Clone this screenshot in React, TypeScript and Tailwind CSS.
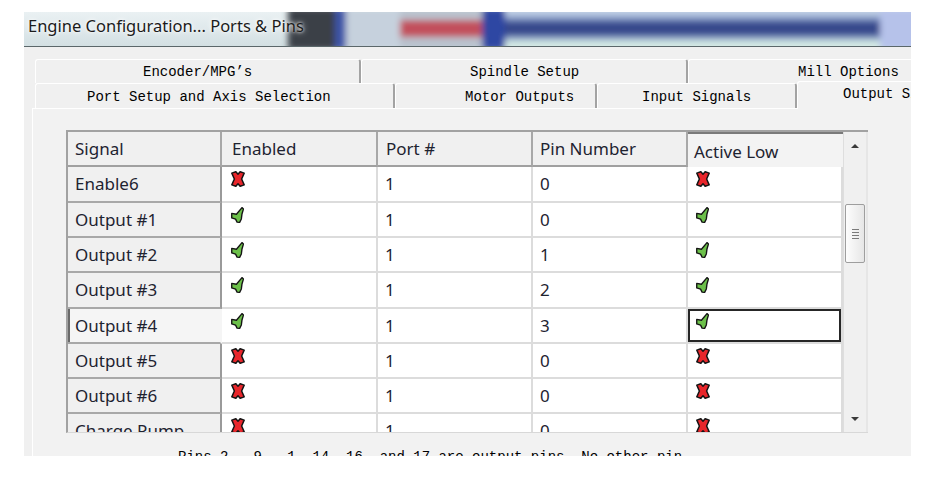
import React from "react";

type Mark = "x" | "v";

type Row = {
  signal: string;
  enabled: Mark;
  port: string;
  pin: string;
  low: Mark;
  h: string;
  current?: boolean;
};

const rows: Row[] = [
  { signal: "Enable6", enabled: "x", port: "1", pin: "0", low: "x", h: "h-[36px]" },
  { signal: "Output #1", enabled: "v", port: "1", pin: "0", low: "v", h: "h-[35px]" },
  { signal: "Output #2", enabled: "v", port: "1", pin: "1", low: "v", h: "h-[35px]" },
  { signal: "Output #3", enabled: "v", port: "1", pin: "2", low: "v", h: "h-[36px]" },
  { signal: "Output #4", enabled: "v", port: "1", pin: "3", low: "v", h: "h-[35px]", current: true },
  { signal: "Output #5", enabled: "x", port: "1", pin: "0", low: "x", h: "h-[35px]" },
  { signal: "Output #6", enabled: "x", port: "1", pin: "0", low: "x", h: "h-[35px]" },
  { signal: "Charge Pump", enabled: "x", port: "1", pin: "0", low: "x", h: "h-[35px]" },
];

function Cross() {
  return (
    <svg width="14" height="16" viewBox="0 0 13 15" className="block">
      <path
        d="M0.7 2 L4.5 0.7 L6.5 3 L8.5 0.7 L12.3 2 L9.9 7.5 L12.3 13 L8.5 14.3 L6.5 12 L4.5 14.3 L0.7 13 L3.1 7.5 Z"
        fill="#e8262b"
        stroke="#141414"
        strokeWidth="1.4"
        strokeLinejoin="round"
      />
    </svg>
  );
}

function Tick() {
  return (
    <svg width="13" height="16" viewBox="0 0 12 15" className="block">
      <path
        d="M0.6 6 L5 6.8 L10.2 0.6 L11.6 1.8 L10.2 6.5 L9.6 11.2 L8 14.4 L5.6 14.2 L4.2 11.4 L0.6 10.2 Z"
        fill="#6cc04a"
        stroke="#141414"
        strokeWidth="1.3"
        strokeLinejoin="round"
      />
    </svg>
  );
}

function MarkIcon({ m }: { m: Mark }) {
  return m === "x" ? <Cross /> : <Tick />;
}

function TitleBar() {
  return (
    <div className="relative h-[35px] shrink-0 border-b border-b-[#5b676a] overflow-hidden">
      <svg
        className="absolute inset-0"
        width="887"
        height="34"
        viewBox="0 0 887 34"
        preserveAspectRatio="none"
      >
        <defs>
          <linearGradient id="glass" x1="0" y1="0" x2="0" y2="1">
            <stop offset="0" stopColor="#eaf1f3" />
            <stop offset="1" stopColor="#d3e0e3" />
          </linearGradient>
          <linearGradient id="band" x1="0" y1="0" x2="0" y2="1">
            <stop offset="0" stopColor="#c8d6ea" />
            <stop offset="0.18" stopColor="#b3c5df" />
            <stop offset="0.3" stopColor="#5e74b0" />
            <stop offset="0.38" stopColor="#34478a" />
            <stop offset="0.6" stopColor="#34478a" />
            <stop offset="0.7" stopColor="#7c92c2" />
            <stop offset="0.8" stopColor="#cfe5e2" />
            <stop offset="1" stopColor="#d9efe7" />
          </linearGradient>
          <filter id="haze" x="-5%" y="-50%" width="110%" height="200%">
            <feGaussianBlur stdDeviation="3" />
          </filter>
        </defs>
        <rect width="887" height="34" fill="url(#glass)" />
        <g filter="url(#haze)">
          <rect x="264" y="-4" width="48" height="42" fill="#3a4047" />
          <rect x="311" y="-4" width="11" height="42" fill="#3c55a8" />
          <rect x="322" y="-4" width="54" height="42" fill="#c6d1dd" />
          <rect x="376" y="-4" width="82" height="42" fill="#b9c2ce" />
          <rect x="376" y="8" width="82" height="17" fill="#c24f5b" />
          <rect x="458" y="-4" width="23" height="42" fill="#2f47a3" />
          <rect x="481" y="-4" width="375" height="42" fill="url(#band)" />
          <rect x="856" y="-4" width="40" height="42" fill="#b6c2ea" />
        </g>
      </svg>
      <div className="relative flex h-full items-center pl-[4px] pb-[6px] font-['Noto_Sans',sans-serif] text-[16.5px] text-[#1b1b1b] [text-shadow:0_0_6px_#ffffff,0_0_3px_#ffffff]">
        Engine Configuration... Ports &amp; Pins
      </div>
    </div>
  );
}

function Tabs() {
  const tabText = "font-['Liberation_Mono',monospace] text-[14px] text-black whitespace-nowrap";
  const tab =
    "shrink-0 flex items-center border-t border-l border-t-white border-l-white border-r-2 border-r-[#a3a3a3] rounded-t-[3px] bg-[#f0f0f0]";
  return (
    <div className={tabText}>
      <div className="ml-[11px] mt-[12px] flex h-[24px]">
        <div className={`${tab} w-[326px] pl-[107px] pt-[2px]`}>Encoder/MPG’s</div>
        <div className={`${tab} w-[327px] pl-[108px] pt-[2px]`}>Spindle Setup</div>
        <div className={`${tab} w-[330px] pl-[109px] pt-[2px]`}>Mill Options</div>
      </div>
      <div className="ml-[11px] flex h-[25px]">
        <div className={`${tab} w-[360px] pl-[51px] pt-[3px]`}>Port Setup and Axis Selection</div>
        <div className={`${tab} w-[202px] pl-[69px] pt-[3px]`}>Motor Outputs</div>
        <div className={`${tab} w-[200px] pl-[44px] pt-[3px]`}>Input Signals</div>
        <div className="relative z-10 -mt-[2px] mb-[-1px] flex h-[28px] w-[200px] shrink-0 items-center rounded-t-[3px] border-t border-l border-t-white border-l-white bg-[#f2f2f2] pl-[45px] pb-[3px]">
          Output Signals
        </div>
      </div>
    </div>
  );
}

function HeaderCell({
  label,
  w,
  pl,
  extra = "",
}: {
  label: string;
  w: string;
  pl: string;
  extra?: string;
}) {
  return (
    <div
      className={`flex h-full shrink-0 items-center bg-[#f0f0f0] border-r-2 border-r-[#a8a8a8] border-b-2 border-b-[#a0a0a0] ${w} ${pl} ${extra}`}
    >
      {label}
    </div>
  );
}

function DataRow({ r }: { r: Row }) {
  const cell = "flex h-full shrink-0 bg-white border-r-2 border-r-[#dcdcdc] border-b-2 border-b-[#dcdcdc]";
  return (
    <div className={`flex shrink-0 ${r.h}`}>
      <div
        className={`flex h-full w-[154px] shrink-0 items-center border-b-2 border-b-[#a8a8a8] pl-[7px] ${
          r.current
            ? "bg-[#f5f5f5] border-r-2 border-r-transparent shadow-[inset_2px_0_0_#6a6a6a]"
            : "bg-[#f0f0f0] border-r-2 border-r-[#9a9a9a]"
        }`}
      >
        <span className="whitespace-nowrap">{r.signal}</span>
      </div>
      <div className={`${cell} w-[156px] items-start pl-[9px] pt-[4px]`}>
        <MarkIcon m={r.enabled} />
      </div>
      <div className={`${cell} w-[155px] items-center pl-[7px]`}>{r.port}</div>
      <div className={`${cell} w-[155px] items-center pl-[7px]`}>{r.pin}</div>
      <div
        className={`${cell} w-[155px] items-start pl-[8px] pt-[4px] ${
          r.current ? "shadow-[inset_0_0_0_2px_#262626]" : ""
        }`}
      >
        <MarkIcon m={r.low} />
      </div>
    </div>
  );
}

function ScrollBar() {
  return (
    <div className="flex h-full w-[25px] shrink-0 flex-col border-l border-l-[#dedede] border-r-2 border-r-[#e6e6e6] bg-[#f0f0f0]">
      <div className="flex h-[26px] shrink-0 items-center justify-center pt-[1px]">
        <div className="h-0 w-0 border-x-[4px] border-b-[4px] border-x-transparent border-b-[#3a3a3a]" />
      </div>
      <div className="ml-[1px] mt-[46px] flex h-[59px] w-[20px] shrink-0 flex-col items-center justify-center gap-[2px] rounded-[2px] border border-[#9e9e9e] bg-[linear-gradient(to_right,#fdfdfd,#e6e6e6)]">
        <div className="h-px w-[7px] bg-[#7a7a7a]" />
        <div className="h-px w-[7px] bg-[#7a7a7a]" />
        <div className="h-px w-[7px] bg-[#7a7a7a]" />
        <div className="h-px w-[7px] bg-[#7a7a7a]" />
      </div>
      <div className="flex-1" />
      <div className="flex h-[26px] shrink-0 items-center justify-center">
        <div className="h-0 w-0 border-x-[4px] border-t-[4px] border-x-transparent border-t-[#3a3a3a]" />
      </div>
    </div>
  );
}

function SignalGrid() {
  return (
    <div className="flex h-[303px] w-[802px] border-t-2 border-l-2 border-t-[#a2a2a2] border-l-[#a2a2a2] border-b border-b-[#d8d8d8] bg-white font-['Noto_Sans',sans-serif] text-[17px] text-[#1e2330]">
      <div className="flex h-full w-[775px] shrink-0 flex-col overflow-hidden">
        <div className="flex h-[35px] shrink-0">
          <HeaderCell label="Signal" w="w-[154px]" pl="pl-[7px]" extra="border-r-[#9a9a9a]" />
          <HeaderCell label="Enabled" w="w-[156px]" pl="pl-[10px]" />
          <HeaderCell label="Port #" w="w-[155px]" pl="pl-[8px]" />
          <HeaderCell label="Pin Number" w="w-[155px]" pl="pl-[7px]" extra="border-r-[#8c8c8c] border-b-[#8c8c8c]" />
          <div className="flex h-full w-[155px] shrink-0 items-center border-t-2 border-t-[#7a7a7a] bg-[#f3f3f3] pl-[6px] pt-[3px]">
            Active Low
          </div>
        </div>
        {rows.map((r) => (
          <DataRow key={r.signal} r={r} />
        ))}
      </div>
      <ScrollBar />
    </div>
  );
}

export default function App() {
  return (
    <div className="h-[482px] w-[938px] overflow-hidden bg-white pl-[24px] pt-[12px]">
      <div className="flex h-[444px] w-[887px] flex-col overflow-hidden bg-[#f0f0f0]">
        <TitleBar />
        <Tabs />
        <div className="ml-[8px] flex-1 border-t border-l border-t-white border-l-white bg-[#f2f2f2] pl-[33px] pt-[21px]">
          <SignalGrid />
          <div className="mt-[16px] pl-[112px] font-['Liberation_Mono',monospace] text-[14px] leading-[16px] whitespace-nowrap text-black">
            Pins 2 - 9 , 1, 14, 16, and 17 are output pins. No other pin
          </div>
        </div>
      </div>
    </div>
  );
}
